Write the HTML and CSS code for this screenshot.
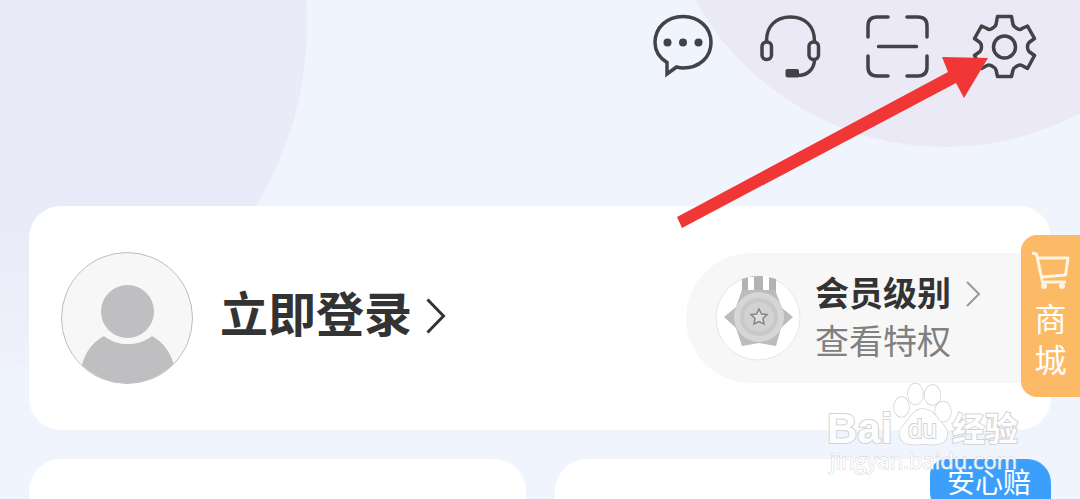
FILE: index.html
```html
<!DOCTYPE html>
<html lang="zh-CN">
<head>
  <meta charset="utf-8">
  <meta name="viewport" content="width=device-width, initial-scale=1">
  <title>我的</title>
  <link rel="stylesheet" href="styles.css">
</head>
<body>

<div class="page">
  <div class="bg-circle bg-left"></div>
  <div class="bg-circle bg-right"></div>

  <header class="toolbar">
    <button class="icon-btn" aria-label="消息">
      <svg viewBox="0 0 64 64">
        <path d="M16 48.500C8 43.500 4 36.500 4 28.500C4 13.500 16 2.500 32 2.500S60 13.500 60 28.500S48 54 32 54C29.500 54 27.500 53.500 25.500 53L16 60Z"/>
        <g class="solid"><circle cx="16.500" cy="28.500" r="4"/><circle cx="32" cy="28.500" r="4"/><circle cx="47.500" cy="28.500" r="4"/></g>
      </svg>
    </button>
    <button class="icon-btn" aria-label="客服">
      <svg viewBox="0 0 64 64">
        <path d="M8.500 27C8.500 12 18 3 32.500 3S56.500 12 56.500 27"/>
        <rect x="4" y="28" width="9.500" height="17.500" rx="4.500"/>
        <rect x="51" y="28" width="9.500" height="17.500" rx="4.500"/>
        <path d="M56.500 46C56 55 50 61.500 39 61.500"/>
        <rect class="solid" x="27.500" y="55" width="13.500" height="8.500" rx="2"/>
      </svg>
    </button>
    <button class="icon-btn" aria-label="扫一扫">
      <svg viewBox="0 0 64 64">
        <path class="round" d="M3 23V12Q3 3 12 3H23M42 3H53Q62 3 62 12V23M62 42V53Q62 62 53 62H42M23 62H12Q3 62 3 53V42M13.500 32.500H51.500"/>
      </svg>
    </button>
    <button class="icon-btn" aria-label="设置">
      <svg viewBox="0 0 64 64">
        <path class="round" d="M25.500 2.500H39.500L41 10.500Q41.500 12.500 43.500 13.500L46 15Q48 16 50 14.500L55.500 12L62.500 24.500L57 28.500Q55.500 30 55.500 33T57 37.500L62.500 41.500L55.500 54.500L50 51.500Q48 50.500 46 51.500L43.500 53Q41.500 54 41 56L39.500 62.500H25.500L24 56Q23.500 54 21.500 53L19 51.500Q17 50.500 15 51.500L9.500 54.500L2.500 41.500L8 37.500Q9.500 36 9.500 33T8 28.500L2.500 24.500L9.500 12L15 14.500Q17 16 19 15L21.500 13.500Q23.500 12.500 24 10.500Z"/>
        <circle cx="32.500" cy="33" r="11"/>
      </svg>
    </button>
  </header>

  <main class="content">
    <section class="card profile">
      <svg class="avatar" viewBox="0 0 132 132">
        <circle cx="66" cy="66" r="65.500" fill="#f7f7f8" stroke="#bdbdbf"/>
        <circle cx="66.500" cy="59.500" r="26.500" fill="#bfbfc2"/>
        <path d="M21 113C24 101 31 90 43 84C57 95 77 95 91 84C102 90 110 101 112.500 112A66 66 0 0 1 21 113Z" fill="#bfbfc2"/>
      </svg>
      <a class="login" href="#login">
        立即登录
        <svg viewBox="0 0 20 36"><path d="M1.500 1.500L17.500 18L1.500 34.500"/></svg>
      </a>
      <a class="member" href="#member">
        <svg class="medal" viewBox="0 0 86 86">
          <circle cx="43" cy="43" r="42" fill="#fff" stroke="#e6e6e6"/>
          <path d="M27 4Q43 -2 61 4V20H27Z" fill="#b3b3b3"/>
          <path d="M33 2H39V17H33ZM48 1H54V17H48Z" fill="#fff"/>
          <path d="M27 15H60L67 33L78 42L66 53L61 71L44 68L27 71L21 53L9 42L21 32Z" fill="#bcbcbc"/>
          <circle cx="44" cy="42" r="25" fill="#d6d6d6"/>
          <circle cx="44" cy="42" r="19" fill="#c8c8c8"/>
          <circle cx="44" cy="42" r="15" fill="#d2d2d2"/>
          <path d="M44 34L46.500 39L52 39.500L48 43.500L49 49L44 46.500L39 49L40 43.500L36 39.500L41.500 39Z" fill="#dedede" stroke="#858585" stroke-width="1.500"/>
        </svg>
        <span class="member-text">
          <strong>会员级别</strong>
          <span>查看特权</span>
        </span>
        <svg class="member-arrow" viewBox="0 0 16 28"><path d="M2 2L14 14L2 26"/></svg>
      </a>
    </section>

    <div class="tiles">
      <section class="card tile"></section>
      <section class="card tile"><span class="badge">安心赔</span></section>
    </div>
  </main>

  <a class="mall" href="#mall">
    <svg viewBox="0 0 42 40">
      <path d="M2 3L6.500 4L12.500 32H36M7.500 8H38L35.500 25L12 27"/>
      <circle cx="14" cy="36" r="3"/><circle cx="32" cy="36" r="3"/>
    </svg>
    <span>商</span>
    <span>城</span>
  </a>

  <svg class="watermark" viewBox="0 0 200 100">
    <g class="paw">
      <ellipse cx="75.500" cy="25" rx="7.500" ry="10"/>
      <ellipse cx="89.500" cy="12" rx="7.500" ry="10.500"/>
      <ellipse cx="106.500" cy="13" rx="8" ry="10"/>
      <ellipse cx="117" cy="29.500" rx="8" ry="10"/>
      <path d="M97 27C90 27 86 32 82 38C78 43 73 47 73.500 53C75 64 87 63 97 62C107 63 120 64 121 53C122 47 117 43 113 38C109 32 104 27 97 27Z"/>
    </g>
    <text class="latin" x="1" y="61">Bai</text>
    <text class="du" x="82" y="56">du</text>
    <text class="cjk" x="126" y="59">经验</text>
    <text class="site" x="4" y="87">jingyan.baidu.com</text>
  </svg>

  <svg class="arrow" viewBox="0 0 312 172">
    <path d="M1 160L272 15L266 0L312 1L288 41L280 26L6 171Z"/>
  </svg>
</div>

</body>
</html>
```
FILE: styles.css
```css
* {
  box-sizing: border-box;
}

body {
  margin: 0;
  font-family: "Liberation Sans", "Noto Sans CJK SC", sans-serif;
  color: #333;
}

.page {
  position: relative;
  display: flex;
  flex-direction: column;
  height: 100vh;
  overflow: hidden;
  background: #f0f4fd;
}

a {
  color: inherit;
  text-decoration: none;
}

svg {
  display: block;
  flex: none;
}

/* soft circles behind the header */
.bg-circle {
  position: absolute;
  border-radius: 50%;
}

.bg-left {
  left: -387px;
  top: -322px;
  width: 694px;
  height: 694px;
  background: linear-gradient(#e9ebf8 80%, #eff2fc);
}

.bg-right {
  right: -151px;
  top: -425px;
  width: 572px;
  height: 572px;
  background: #ebe9f6;
}

/* toolbar */
.toolbar {
  position: relative;
  display: flex;
  justify-content: flex-end;
  gap: 43px;
  padding: 14px 44px 128px;
}

.icon-btn {
  width: 64px;
  height: 64px;
  padding: 0;
  border: none;
  background: none;
  cursor: pointer;
}

.icon-btn svg {
  width: 64px;
  height: 64px;
  overflow: visible;
  fill: none;
  stroke: #414347;
  stroke-width: 3.5;
}

.icon-btn .round {
  stroke-linecap: round;
  stroke-linejoin: round;
}

.icon-btn .solid {
  fill: #414347;
  stroke: none;
}

/* cards */
.content {
  position: relative;
  flex: 1;
  display: flex;
  flex-direction: column;
  gap: 29px;
  padding: 0 29px;
}

.card {
  background: #fff;
  border-radius: 32px;
}

.profile {
  display: flex;
  align-items: center;
  padding: 46px 0 46px 32px;
}

.avatar {
  width: 132px;
  height: 132px;
}

.login {
  display: flex;
  align-items: center;
  gap: 14px;
  margin-left: 27px;
  padding-bottom: 4px;
  font-size: 48px;
  line-height: 64px;
  font-weight: bold;
}

.login svg {
  width: 20px;
  height: 36px;
  fill: none;
  stroke: #333;
  stroke-width: 3;
}

.member {
  display: flex;
  align-items: center;
  width: 365px;
  height: 130px;
  margin-left: auto;
  padding-left: 29px;
  background: #f7f7f7;
  border-radius: 65px 0 0 65px;
}

.medal {
  width: 86px;
  height: 86px;
}

.member-text {
  display: flex;
  flex-direction: column;
  margin-left: 14px;
  font-size: 34px;
  line-height: 48px;
  color: #808080;
}

.member-text strong {
  color: #333;
}

.member-arrow {
  width: 16px;
  height: 28px;
  align-self: flex-start;
  margin: 27px 0 0 14px;
  fill: none;
  stroke: #999;
  stroke-width: 2;
}

.tiles {
  flex: 1;
  display: flex;
  gap: 29px;
}

.tile {
  flex: 1;
  display: flex;
  justify-content: flex-end;
  align-items: flex-start;
  border-radius: 32px 32px 0 0;
}

.badge {
  padding: 0 20px 0 17px;
  font-size: 28px;
  line-height: 50px;
  color: #fff;
  background: #3c9ffc;
  border-radius: 16px 24px 0 16px;
}

/* floating shop tab */
.mall {
  position: absolute;
  right: 0;
  top: 235px;
  display: flex;
  flex-direction: column;
  align-items: center;
  width: 59px;
  padding: 15px 0 15px;
  font-size: 32px;
  line-height: 41px;
  color: #fff;
  background: #fdba66;
  border-radius: 16px 0 0 16px;
}

.mall svg {
  width: 42px;
  height: 40px;
  margin-bottom: 10px;
  fill: none;
  stroke: #fff5e0;
  stroke-width: 3;
  stroke-linejoin: round;
}

.mall circle {
  fill: #fff5e0;
  stroke: none;
}

.watermark {
  position: absolute;
  right: 54px;
  top: 382px;
  width: 200px;
  height: 100px;
  fill: #fff;
  stroke: #cfcfd3;
  stroke-width: 2;
  font-weight: bold;
  paint-order: stroke;
  opacity: 0.9;
}

.watermark .paw {
  stroke-width: 1.5;
}

.watermark .latin {
  font-size: 42px;
}

.watermark .du {
  font-size: 26px;
  font-weight: normal;
}

.watermark .cjk {
  font-size: 33px;
}

.watermark .site {
  font-family: "Open Sans", sans-serif;
  font-size: 22px;
  font-weight: normal;
  stroke-width: 1;
}

.arrow {
  position: absolute;
  right: 92px;
  top: 57px;
  width: 312px;
  height: 172px;
  fill: #f13735;
}
```
